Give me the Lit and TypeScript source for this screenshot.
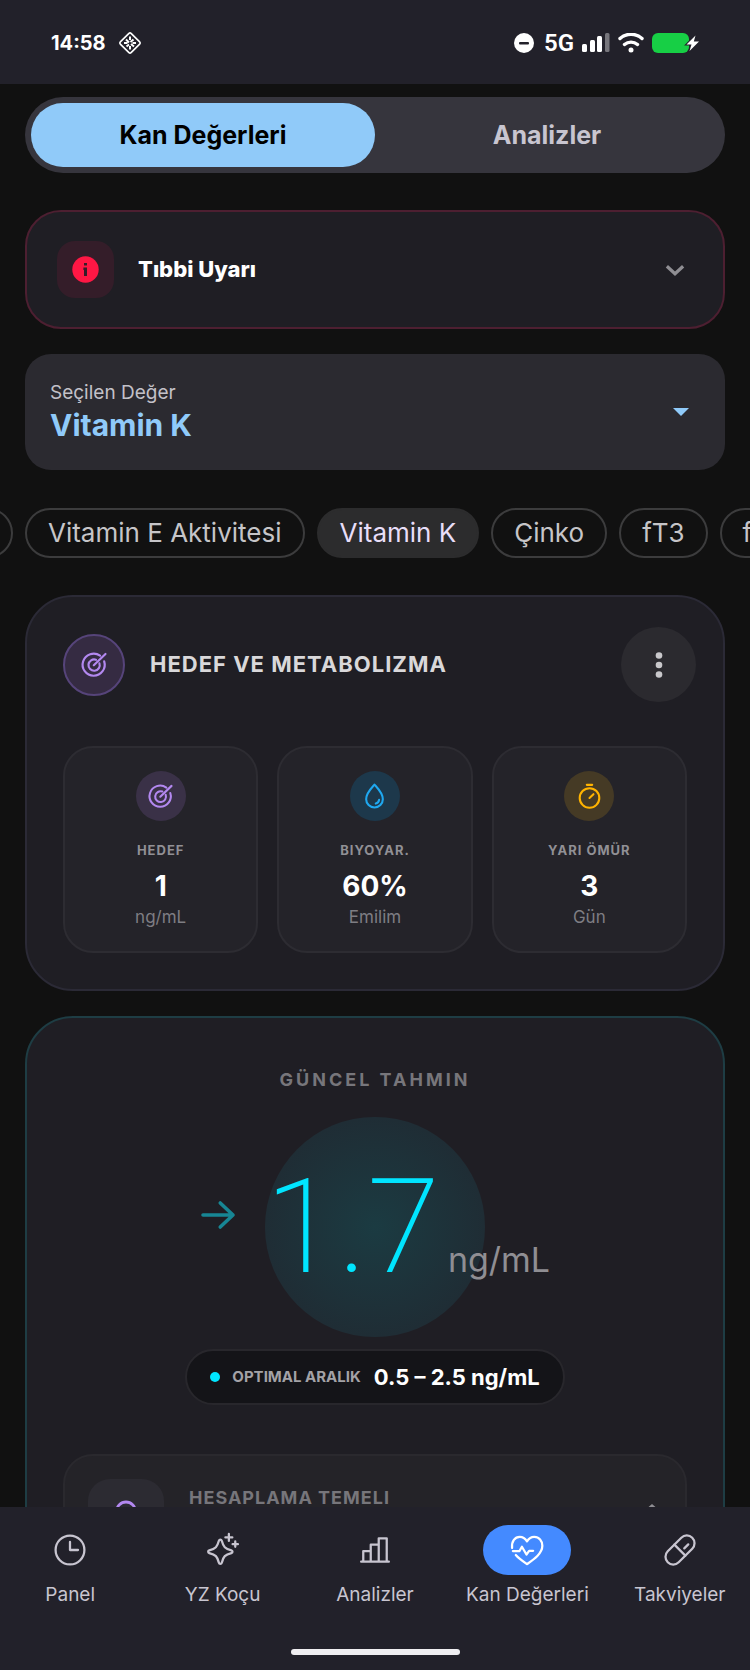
import { LitElement, html, css, svg, nothing, type SVGTemplateResult } from "lit";
import { customElement, property, state } from "lit/decorators.js";
import { classMap } from "lit/directives/class-map.js";

const ICONS: Record<string, SVGTemplateResult> = {
  target: svg`<path d="M21.400 8.600A10.200 10.200 0 1 1 17.600 3.400"/><path d="M17 10.400A5.200 5.200 0 1 1 13.800 7.200"/><path d="M11.800 12.200 22.600 1.800"/>`,
  drop: svg`<path d="M12 .6C9 4 4 8.600 4 14.600a8 8 0 0 0 16 0C20 8.600 15 4 12 .6Z"/><path d="M16.400 15.200a4.400 4.400 0 0 1-3.200 3.600"/>`,
  timer: svg`<circle cx="12" cy="13.400" r="9.400"/><path d="M9.400 .8h5.200M12 13.400l3.800-3.600"/>`,
  clock: svg`<circle cx="12" cy="12" r="10.800"/><path d="M12 6V12h6"/>`,
  user: svg`<circle cx="12" cy="8" r="6.600"/><path d="M3 23c1-4 4.500-6 9-6s8 2 9 6"/>`,
  sparkle: svg`<path d="M10 4.200c.6 0 .9.300 1.100.9 1.200 4.600 2.400 6 7.200 7.200 1.100.3 1.100 1.700 0 2-4.800 1.200-6 2.600-7.200 7.200-.3 1.100-1.900 1.100-2.200 0-1.200-4.600-2.400-6-7.200-7.200-1.100-.3-1.100-1.700 0-2 4.800-1.200 6-2.600 7.200-7.200.2-.6.500-.9 1.100-.9Z"/><path d="M16.400 0v5.200M13.800 2.600H19M21.200 5.600v4M19.200 7.600h4"/>`,
  bars: svg`<path d="M1.600 20.800h20.800M3.200 20.600v-7.800h5.600M8.800 20.600V8h6M14.800 20.600V3.200h6V20.600"/>`,
  heart: svg`<path d="M.8 10.400C.3 5.400 3 2.200 6.600 2.200c2.400 0 4.100 1.300 5.400 3.300 1.300-2 3-3.300 5.400-3.300 3.700 0 6.100 3 6.100 6.700 0 5.800-6.300 10.100-11.500 13.700-2.800-1.900-6.100-4.100-8.400-6.800"/><path d="M1.400 12.800h5l1.800-3.200 3.400 5.800 2-2.800h3"/>`,
  pill: svg`<rect x="6.200" y="-1" width="11.600" height="26" rx="5.800" transform="rotate(45 12 12)"/><path d="m7.800 8 8.200 8.200M15.200 10.800l3-3"/>`,
  chevron: svg`<path d="m4.500 8.500 7.500 7 7.500-7"/>`,
  arrow: svg`<path d="M2 12h20M13.500 4 22 12l-8.500 8"/>`,
};

const icon = (name: string, cls = "") =>
  html`<svg class="icon ${cls}" viewBox="0 0 24 24" aria-hidden="true">${ICONS[name]}</svg>`;

const shared = css`
  * { box-sizing: border-box; }
  button, select { font: inherit; color: inherit; border: 0; background: none; margin: 0; padding: 0; cursor: pointer; }
  .icon {
    display: block; flex: none; overflow: visible; fill: none; stroke: currentColor;
    stroke-width: 2; stroke-linecap: round; stroke-linejoin: round;
  }
`;

@customElement("status-bar")
export class StatusBar extends LitElement {
  static styles = [shared, css`
    :host {
      display: flex; align-items: center; justify-content: space-between; flex: none;
      height: 84px; padding: 2px 51px 0 51px; background: #22212a; color: #fff;
    }
    .side { display: flex; align-items: center; }
    .left { gap: 12px; }
    .right { gap: 8px; }
    .time { font-size: 20px; font-weight: 700; }
    .net { font-size: 24px; line-height: 24px; font-weight: 600; font-family: Roboto, "Open Sans", sans-serif; margin-left: 2px; }
    svg { display: block; }
  `];
  render() {
    return html`
      <div class="side left">
        <span class="time">14:58</span>
        <svg width="24" height="24" viewBox="0 0 24 24" fill="none" stroke="#fff" stroke-width="1.600">
          <rect x="4.400" y="4.400" width="15.200" height="15.200" rx="1.500" transform="rotate(45 12 12)"/>
          <path d="m8 8.500 3 3M12 5.500v3.500M15.500 8.500 12.500 11M6 12h3.500M14.500 12H18M8.500 15.500l2.500-2M12 15v3.500M13 13l3 2.500" stroke-width="2"/>
        </svg>
      </div>
      <div class="side right">
        <svg width="20" height="20" viewBox="0 0 20 20"><circle cx="10" cy="10" r="10" fill="#fff"/><rect x="5" y="9" width="10" height="2.400" rx="1" fill="#22212a"/></svg>
        <span class="net">5G</span>
        <svg width="28" height="20" viewBox="0 0 28 20" fill="#fff">
          <rect x="0" y="11" width="5" height="8" rx="1.500"/><rect x="8" y="7" width="5" height="12" rx="1.500"/>
          <rect x="15" y="3" width="5" height="16" rx="1.500"/><rect x="23" y="0" width="4.500" height="19" rx="1.500" fill="#77767c"/>
        </svg>
        <svg width="26" height="20" viewBox="0 0 26 20" fill="none" stroke="#fff" stroke-width="3.400" stroke-linecap="round">
          <path d="M2 5.500a16.500 16.500 0 0 1 22 0M6.500 11.500a10 10 0 0 1 13 0"/><circle cx="13" cy="17" r="2.500" fill="#fff" stroke="none"/>
        </svg>
        <svg width="47" height="20" viewBox="0 0 47 20">
          <rect width="37" height="20" rx="6" fill="#17cf45"/>
          <path d="M43.500 2.500 34.500 11.500h5l-2 6.500 9.500-9.500h-5.200Z" fill="#fff" stroke="#22212a" stroke-width="2" paint-order="stroke"/>
        </svg>
      </div>`;
  }
}

@customElement("stat-tile")
export class StatTile extends LitElement {
  @property() icon = "";
  @property() label = "";
  @property() value = "";
  @property() unit = "";
  @property() tone = "";
  static styles = [shared, css`
    :host {
      display: flex; flex-direction: column; align-items: center; min-width: 0;
      padding: 23px 8px 24px; border: 2px solid #2d2c32; border-radius: 30px; background: #242329;
    }
    .badge { display: grid; place-items: center; width: 50px; height: 50px; border-radius: 50%; margin-bottom: 18px; }
    .icon { width: 25px; height: 25px; }
    .purple { background: #3a3147; color: #b388f0; }
    .blue { background: #1d384b; color: #1fa8f0; }
    .amber { background: #453a25; color: #ffb300; }
    .label { font-size: 13px; line-height: 22px; font-weight: 700; letter-spacing: 1px; color: #919095; }
    .value { font-size: 28px; line-height: 36px; margin: 7px 0 3px; font-weight: 700; color: #fff; }
    .unit { font-size: 17px; line-height: 20px; color: #7e7d83; }
  `];
  render() {
    return html`
      <div class="badge ${this.tone}">${icon(this.icon)}</div>
      <div class="label">${this.label}</div>
      <div class="value">${this.value}</div>
      <div class="unit">${this.unit}</div>`;
  }
}

@customElement("app-root")
export class AppRoot extends LitElement {
  @state() private tab = 0;
  @state() private chip = "Vitamin K";
  @state() private page = 3;

  static styles = [shared, css`
    :host {
      display: flex; flex-direction: column; height: 100vh; overflow: hidden;
      background: #111; color: #fff; font-family: Inter, "Open Sans", sans-serif; line-height: 1.2;
    }
    main { flex: 1; min-height: 0; overflow-y: auto; scrollbar-width: none; padding: 13px 25px 0; }

    .tabs { display: grid; grid-template-columns: 1fr 1fr; padding: 6px; border-radius: 38px; background: #36353d; }
    .tab { height: 64px; border-radius: 32px; font-size: 25px; font-weight: 700; color: #c8c5d0; }
    .tab.on { background: #90caf9; color: #000; }

    .alert {
      display: flex; align-items: center; width: 100%; margin-top: 37px; padding: 29px 35px 29px 30px;
      border: 2px solid #4d1f31; border-radius: 36px; background: #1f1e24; text-align: left;
    }
    .alert-badge { display: grid; place-items: center; width: 57px; height: 57px; border-radius: 18px; background: #341d29; }
    .alert-text { flex: 1; margin-left: 24px; font-size: 22px; font-weight: 800; }
    .alert .icon { width: 26px; height: 26px; color: #8f8e93; stroke-width: 3; stroke-linecap: butt; stroke-linejoin: miter; }

    .picker {
      display: flex; align-items: center; margin-top: 25px; padding: 26px 36px 26px 25px;
      border-radius: 26px; background: #2b2a30;
    }
    .picker-body { flex: 1; display: flex; flex-direction: column; }
    .picker label { font-size: 19px; line-height: 26px; color: #c3c1c8; }
    .picker select {
      appearance: none; width: 100%; height: 38px; font-size: 30px; font-weight: 700; color: #90caf9;
    }

    .chips { display: flex; gap: 12px; margin: 38px -25px 0; padding: 0 25px; overflow-x: auto; scrollbar-width: none; }
    .chip {
      flex: none; min-width: 76px; height: 50px; padding: 0 21px; border: 2px solid #3c3c3d; border-radius: 25px;
      font-size: 26px; color: #c6c5c8; white-space: nowrap;
    }
    .chip.on { background: #2c2c2d; border-color: #2c2c2d; color: #e8def8; }

    .card { border: 2px solid #2b2a36; border-radius: 48px; background: #1f1e24; }
    .goal { margin-top: 37px; padding: 30px 36px 36px; }
    .goal-head { display: flex; align-items: center; margin-right: -9px; }
    .goal-badge {
      display: grid; place-items: center; width: 62px; height: 62px; border: 2px solid #56447a;
      border-radius: 50%; background: #352b42; color: #b388f0;
    }
    .goal-badge .icon { width: 26px; height: 26px; }
    .goal-title { flex: 1; margin: 0 0 0 25px; font-size: 22px; font-weight: 700; letter-spacing: 1px; color: #d9d8da; }
    .more { display: grid; place-items: center; width: 75px; height: 75px; border-radius: 50%; background: #2b2a2f; }
    .tiles { display: grid; grid-template-columns: repeat(3, 1fr); gap: 19px; margin-top: 44px; }

    .estimate { display: flex; flex-direction: column; align-items: center; margin-top: 25px; padding: 48px 36px 36px; border-color: #1e3d44; }
    .eyebrow { margin: 0; font-size: 18px; line-height: 28px; font-weight: 700; letter-spacing: 3px; color: #77767b; }
    .gauge {
      display: grid; grid-template-columns: 1fr 220px 1fr; align-items: center; width: 100%; margin-top: 23px;
    }
    .gauge .icon { width: 36px; height: 36px; justify-self: end; margin: 0 29px 24px 0; color: #178694; stroke-width: 2.400; }
    .disc {
      display: flex; align-items: baseline; width: 220px; height: 220px; padding-top: 33px; border-radius: 50%;
      white-space: nowrap; background: radial-gradient(circle, #1b3b42 0%, #1f2d35 70%);
    }
    .reading { font-family: Roboto, sans-serif; font-size: 132px; line-height: 155px; font-weight: 200; color: #00e5ff; }
    .reading-unit { margin-left: 8px; font-size: 34px; color: #8f8e93; }
    .range {
      display: flex; align-items: center; height: 56px; margin-top: 12px; padding: 0 23px;
      border: 2px solid #28272c; border-radius: 28px; background: #141418;
    }
    .dot { width: 10px; height: 10px; border-radius: 50%; background: #00e5ff; }
    .range-label { margin: 0 13px 0 12px; font-size: 15px; font-weight: 700; color: #a3a2a6; }
    .range-value { font-size: 22px; font-weight: 700; }
    .basis {
      display: flex; align-items: flex-start; width: 100%; margin-top: 49px; padding: 23px;
      border: 2px solid #2a292e; border-radius: 30px; background: #242328; text-align: left;
    }
    .basis-badge { display: grid; place-items: center; width: 76px; height: 76px; border-radius: 22px; background: #2c2b32; color: #b388f0; }
    .basis-badge .icon { width: 34px; height: 34px; }
    .basis-title { flex: 1; margin-left: 25px; font-size: 18px; line-height: 38px; font-weight: 700; letter-spacing: 1px; color: #77767b; }
    .basis .up { margin: 25px 2px 0 0; }

    nav { flex: none; padding: 18px 0 15px; background: #22212a; overflow: hidden; }
    .nav-items { display: grid; grid-template-columns: repeat(5, 1fr); margin: 0 -6px; }
    .nav-item { display: flex; flex-direction: column; align-items: center; gap: 8px; font-size: 19px; line-height: 24px; color: #c8c5d0; text-decoration: none; white-space: nowrap; }
    .nav-icon { display: grid; place-items: center; width: 88px; height: 50px; border-radius: 25px; }
    .nav-icon .icon { width: 32px; height: 32px; stroke-width: 1.700; }
    .nav-item.on .nav-icon { background: #448aff; color: #fff; }
    .home { width: 169px; height: 6px; margin: 42px auto 0; border-radius: 3px; background: #efeef1; }
  `];

  firstUpdated() {
    const row = this.renderRoot.querySelector(".chips") as HTMLElement;
    const first = row.querySelector(".chip") as HTMLElement;
    row.scrollLeft = first.offsetWidth + 12;
  }

  render() {
    const chips = ["", "Vitamin E Aktivitesi", "Vitamin K", "Çinko", "fT3", "fT4"];
    const nav = [["clock", "Panel"], ["sparkle", "YZ Koçu"], ["bars", "Analizler"], ["heart", "Kan Değerleri"], ["pill", "Takviyeler"]];
    return html`
      <status-bar></status-bar>
      <main>
        <div class="tabs" role="tablist">
          ${["Kan Değerleri", "Analizler"].map((t, i) => html`
            <button class=${classMap({ tab: true, on: this.tab === i })} role="tab"
              aria-selected=${this.tab === i ? "true" : "false"} @click=${() => (this.tab = i)}>${t}</button>`)}
        </div>

        <button class="alert">
          <span class="alert-badge">
            <svg width="27" height="27" viewBox="0 0 27 27" aria-hidden="true"><circle cx="13.500" cy="13.500" r="13.200" fill="#ff1744"/><path d="M12 7h3v2.600h-3zM11.400 11.500H15V20h-3v-6h-.6z" fill="#341d29"/></svg>
          </span>
          <span class="alert-text">Tıbbi Uyarı</span>
          ${icon("chevron")}
        </button>

        <div class="picker">
          <div class="picker-body">
            <label for="marker">Seçilen Değer</label>
            <select id="marker"><option>Vitamin K</option></select>
          </div>
          <svg width="16" height="8" viewBox="0 0 16 8" aria-hidden="true"><path d="M0 0h16L8 8Z" fill="#90caf9"/></svg>
        </div>

        <div class="chips">
          ${chips.map((c) => html`
            <button class=${classMap({ chip: true, on: this.chip === c })}
              aria-hidden=${c ? nothing : "true"} @click=${() => (this.chip = c)}>${c}</button>`)}
        </div>

        <section class="card goal">
          <div class="goal-head">
            <span class="goal-badge">${icon("target")}</span>
            <h2 class="goal-title">HEDEF VE METABOLIZMA</h2>
            <button class="more">
              <svg width="8" height="28" viewBox="0 0 8 28" fill="#c9c8cb" aria-hidden="true"><circle cx="4" cy="4.500" r="3.300"/><circle cx="4" cy="14" r="3.300"/><circle cx="4" cy="23.500" r="3.300"/></svg>
            </button>
          </div>
          <div class="tiles">
            <stat-tile icon="target" tone="purple" label="HEDEF" value="1" unit="ng/mL"></stat-tile>
            <stat-tile icon="drop" tone="blue" label="BIYOYAR." value="60%" unit="Emilim"></stat-tile>
            <stat-tile icon="timer" tone="amber" label="YARI ÖMÜR" value="3" unit="Gün"></stat-tile>
          </div>
        </section>

        <section class="card estimate">
          <h2 class="eyebrow">GÜNCEL TAHMIN</h2>
          <div class="gauge">
            ${icon("arrow")}
            <div class="disc"><span class="reading">1.7</span><span class="reading-unit">ng/mL</span></div>
          </div>
          <div class="range">
            <span class="dot"></span>
            <span class="range-label">OPTIMAL ARALIK</span>
            <span class="range-value">0.5 – 2.5 ng/mL</span>
          </div>
          <button class="basis">
            <span class="basis-badge">${icon("user")}</span>
            <span class="basis-title">HESAPLAMA TEMELI</span>
            <svg class="up" width="16" height="9" viewBox="0 0 16 9" aria-hidden="true"><path d="m1 8 7-6 7 6" fill="none" stroke="#8f8e93" stroke-width="3"/></svg>
          </button>
        </section>
      </main>

      <nav>
        <div class="nav-items">
          ${nav.map(([ic, label], i) => html`
            <a class=${classMap({ "nav-item": true, on: this.page === i })} href="#"
              @click=${(e: Event) => { e.preventDefault(); this.page = i; }}>
              <span class="nav-icon">${icon(ic)}</span><span>${label}</span>
            </a>`)}
        </div>
        <div class="home"></div>
      </nav>`;
  }
}
